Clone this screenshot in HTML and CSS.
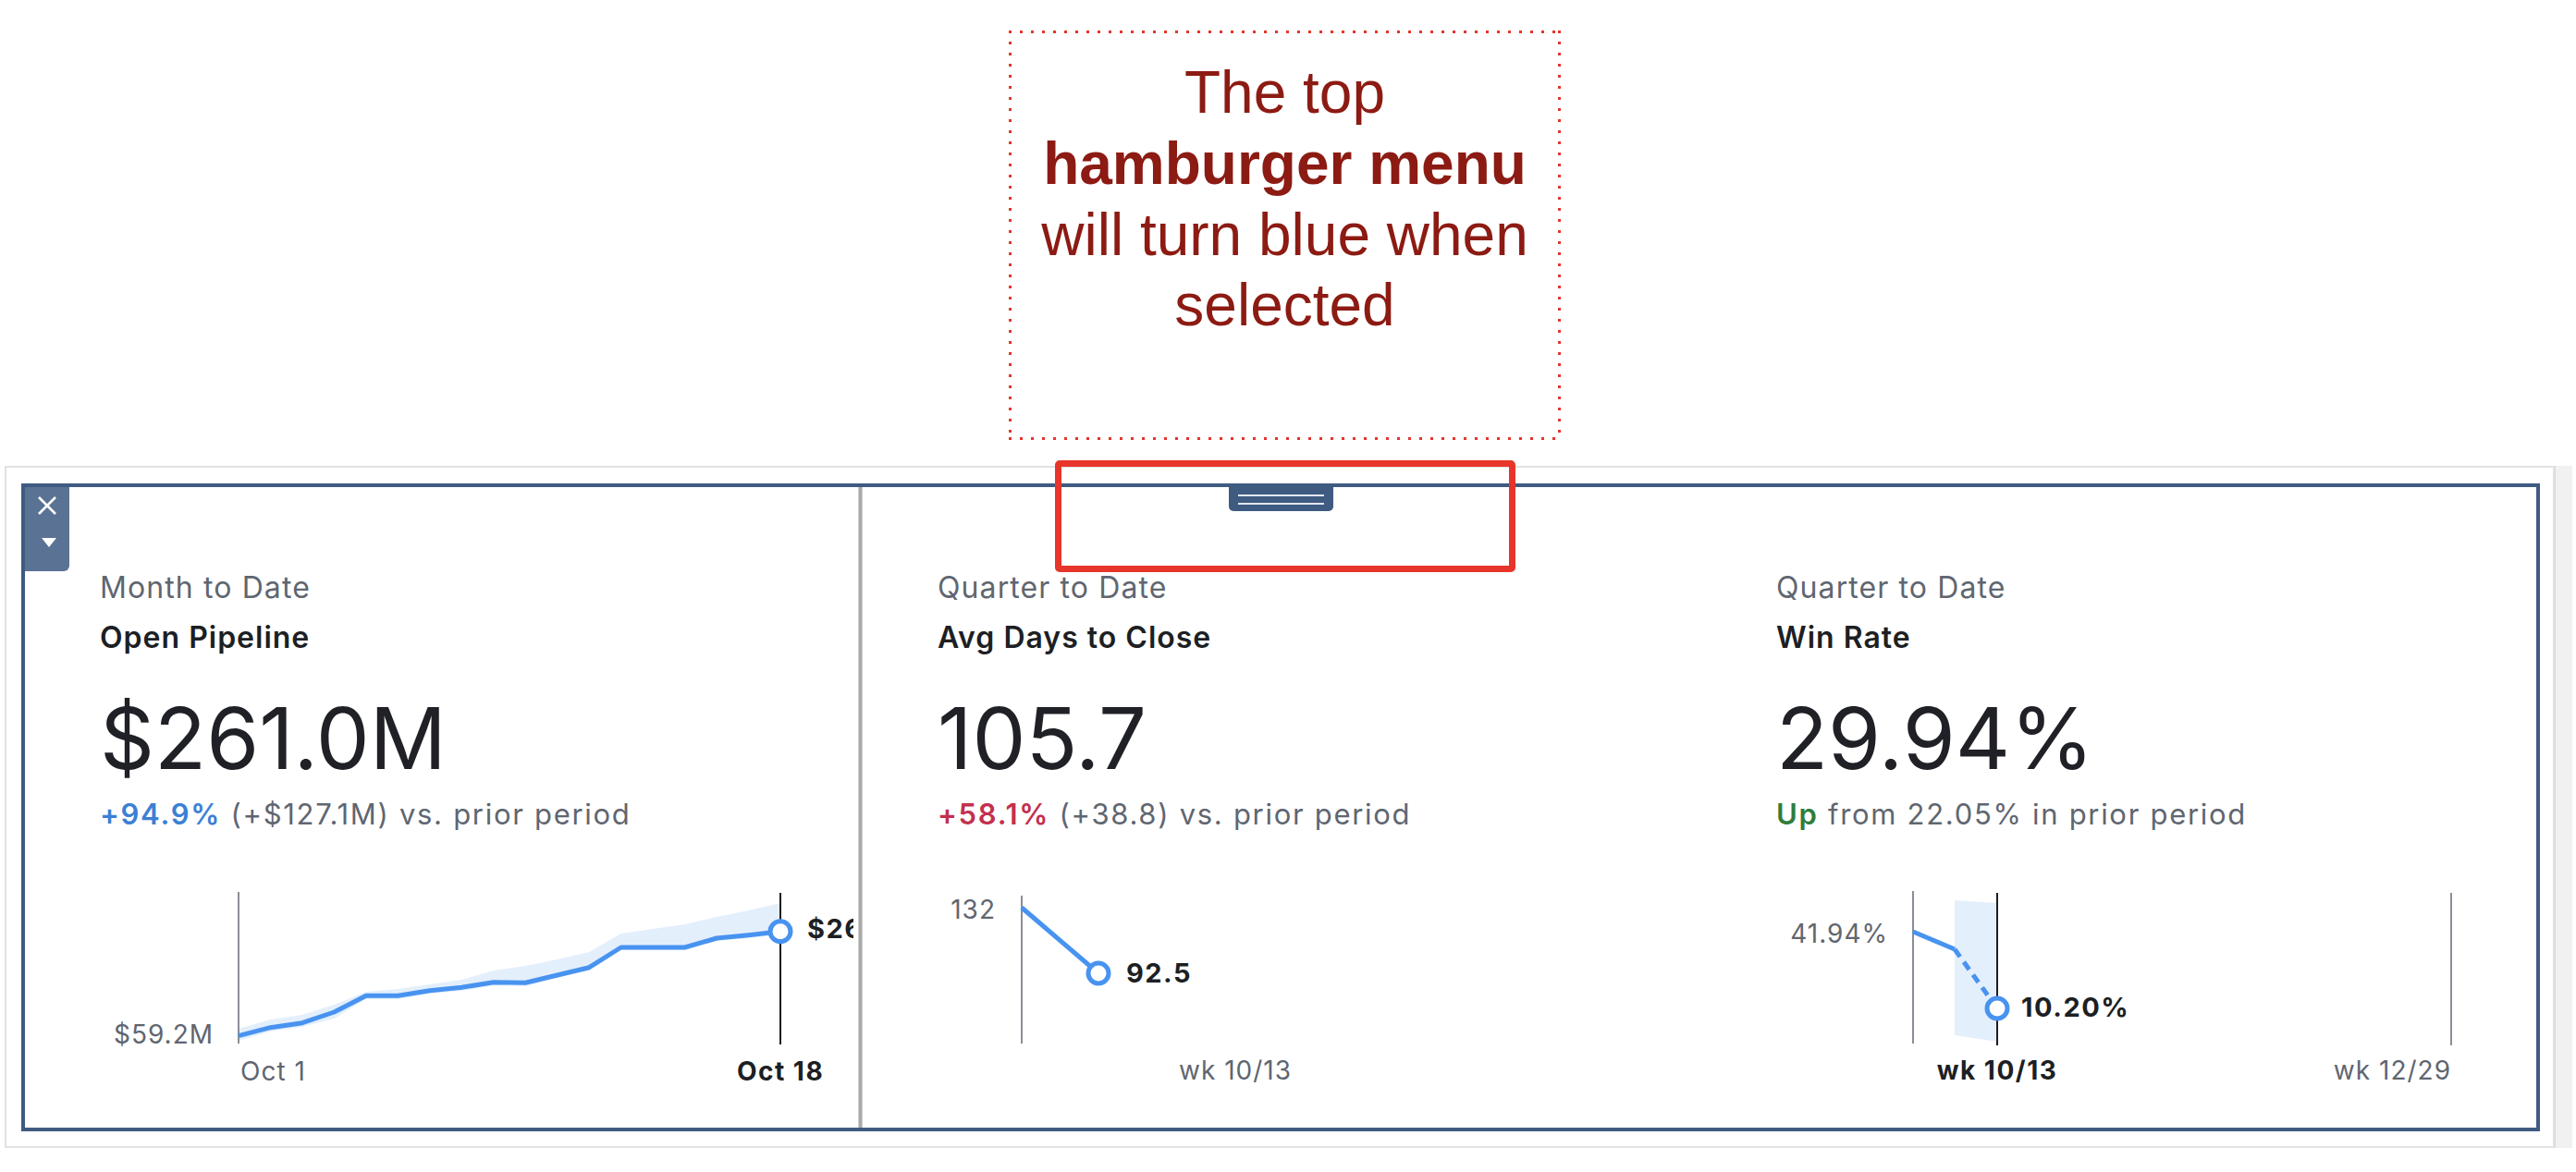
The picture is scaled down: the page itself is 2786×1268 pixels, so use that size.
FILE: index.html
```html
<!DOCTYPE html>
<html lang="en">
<head>
<meta charset="utf-8">
<title>Dashboard annotation</title>
<link rel="stylesheet" href="styles.css">
</head>
<body>
<div class="top">
  <div class="callout">
    <p class="callout-text">The top<br><b>hamburger menu</b><br>will turn blue when<br>selected</p>
  </div>
</div>
<div class="workspace">
  <div class="panel">
    <div class="frame">
      <div class="tab">
        <svg class="tab-close" width="22" height="22" viewBox="0 0 22 22"><path d="M2 2 L20 20 M20 2 L2 20"/></svg>
        <svg class="tab-caret" width="18" height="12" viewBox="0 0 18 12"><path d="M1 1 H17 L9 11 Z"/></svg>
      </div>
      <div class="handle"><span></span><span></span></div>

      <section class="kpi">
        <div class="period">Month to Date</div>
        <div class="title">Open Pipeline</div>
        <div class="value">$261.0M</div>
        <div class="change"><b class="pos">+94.9%</b> (+$127.1M) vs. prior period</div>
        <svg class="chart" width="815" height="250" viewBox="0 0 815 250">
          <polygon class="band" points="150,168 184.5,158 218.9,153 253.4,142 287.9,128 322.4,125 356.8,120 391.3,115 425.8,105 460.2,100 494.7,93 529.2,85 563.6,65 598.1,60 632.6,55 667.1,47 701.5,40 736,32 736,66 701.5,70 667.1,73 632.6,83 598.1,83 563.6,83 529.2,105 494.7,113 460.2,122 425.8,121 391.3,127 356.8,130 322.4,136 287.9,136 253.4,157 218.9,166 184.5,171 150,181"/>
          <line class="axis" x1="150" y1="20" x2="150" y2="184"/>
          <line class="cursor" x1="736" y1="21" x2="736" y2="185"/>
          <polyline class="trend" points="150,175.7 184.5,166.7 218.9,161.7 253.4,150 287.9,132.3 322.4,132.3 356.8,126.7 391.3,123.3 425.8,117.7 460.2,118.3 494.7,110 529.2,101.7 563.6,80 598.1,80 632.6,80 667.1,70 701.5,66.7 736,62.7"/>
          <circle class="marker" cx="736" cy="62.7" r="11"/>
          <text class="tick" x="123" y="184" text-anchor="end">$59.2M</text>
          <text class="tick" x="152" y="224">Oct 1</text>
          <text class="tick tick-strong" x="736" y="224" text-anchor="middle">Oct 18</text>
          <text class="point-label" x="765" y="70">$261.0M</text>
        </svg>
      </section>

      <div class="divider"></div>

      <section class="kpi">
        <div class="period">Quarter to Date</div>
        <div class="title">Avg Days to Close</div>
        <div class="value">105.7</div>
        <div class="change"><b class="neg">+58.1%</b> (+38.8) vs. prior period</div>
        <svg class="chart" width="826" height="250" viewBox="0 0 826 250">
          <line class="axis" x1="91" y1="24" x2="91" y2="184"/>
          <line class="trend" x1="91" y1="37" x2="174" y2="108"/>
          <circle class="marker" cx="174" cy="108" r="11"/>
          <text class="tick" x="63" y="49" text-anchor="end">132</text>
          <text class="point-label" x="204" y="118">92.5</text>
          <text class="tick" x="261" y="223">wk 10/13</text>
        </svg>
      </section>

      <section class="kpi">
        <div class="period">Quarter to Date</div>
        <div class="title">Win Rate</div>
        <div class="value">29.94%</div>
        <div class="change"><b class="up">Up</b> from 22.05% in prior period</div>
        <svg class="chart" width="822" height="250" viewBox="0 0 822 250">
          <polygon class="band" points="193,29 239,32 239,182 193,175"/>
          <line class="axis" x1="148" y1="19" x2="148" y2="184"/>
          <line class="cursor" x1="239" y1="21" x2="239" y2="186"/>
          <line class="axis" x1="730" y1="21" x2="730" y2="186"/>
          <line class="trend" x1="148" y1="63" x2="193" y2="82"/>
          <line class="trend trend-dashed" x1="193" y1="82" x2="239" y2="146"/>
          <circle class="marker" cx="239" cy="146" r="11"/>
          <text class="tick" x="121" y="75" text-anchor="end">41.94%</text>
          <text class="point-label" x="265" y="155">10.20%</text>
          <text class="tick tick-strong" x="239" y="223" text-anchor="middle">wk 10/13</text>
          <text class="tick" x="730" y="223" text-anchor="end">wk 12/29</text>
        </svg>
      </section>
    </div>
    <div class="highlight"></div>
  </div>
  <div class="track"></div>
</div>
</body>
</html>
```

FILE: styles.css
```css
* { box-sizing: border-box; }

body {
  margin: 0;
  background: #ffffff;
  font-family: Inter, "Noto Sans", "Liberation Sans", sans-serif;
}

/* ---------- annotation callout ---------- */
.top {
  height: 504px;
  padding-top: 33px;
}

.callout {
  width: 597px;
  height: 443px;
  margin-left: 1091px;
  padding-top: 29px;
  background-image:
    repeating-linear-gradient(90deg, #e5352c 0 3px, transparent 3px 12px),
    repeating-linear-gradient(90deg, #e5352c 0 3px, transparent 3px 12px),
    repeating-linear-gradient(180deg, #e5352c 0 3px, transparent 3px 12px),
    repeating-linear-gradient(180deg, #e5352c 0 3px, transparent 3px 12px);
  background-size: 100% 3px, 100% 3px, 3px 100%, 3px 100%;
  background-position: left top, left bottom, left top, right top;
  background-repeat: no-repeat;
}

.callout-text {
  margin: 0;
  font-family: "Liberation Sans", Arial, sans-serif;
  font-size: 64px;
  line-height: 76.8px;
  color: #8c1b13;
  text-align: center;
}

.callout-text b { font-weight: 700; }

/* ---------- workspace ---------- */
.workspace {
  display: flex;
  margin-left: 5px;
}

.panel {
  position: relative;
  width: 2758px;
  height: 738px;
  border: 2px solid #e2e2e2;
  padding: 17px 14px 16px 16px;
}

.track {
  width: 19px;
  height: 738px;
  background: #f1f1f1;
  border-left: 1px solid #dadada;
}

.frame {
  position: relative;
  height: 701px;
  border: 4px solid #3f5b81;
  display: grid;
  grid-template-columns: 901px 5px 907px 1fr;
}

.divider {
  background: #a9a9a9;
  border-left: 1px solid #cfcfcf;
  border-right: 1px solid #cfcfcf;
}

.tab {
  position: absolute;
  top: 0;
  left: 0;
  width: 48px;
  height: 91px;
  background: #5a7293;
  border-radius: 0 0 6px 0;
  display: flex;
  flex-direction: column;
  align-items: center;
  padding-top: 9px;
  gap: 23px;
  z-index: 2;
}

.tab-close path {
  stroke: #ffffff;
  stroke-width: 2.6;
  fill: none;
}

.tab-caret { margin-left: 3px; }

.tab-caret path { fill: #ffffff; }

.handle {
  position: absolute;
  top: 0;
  left: 50%;
  width: 113px;
  height: 26px;
  margin-left: -56.5px;
  background: #3f5b81;
  border-radius: 0 0 5px 5px;
  display: flex;
  flex-direction: column;
  align-items: center;
  padding-top: 8px;
  gap: 7px;
  z-index: 2;
}

.handle span {
  display: block;
  width: 93px;
  height: 2px;
  background: #e1e7ef;
}

.highlight {
  position: absolute;
  left: 1134px;
  top: -8px;
  width: 498px;
  height: 121px;
  border: 7px solid #e8352b;
  border-radius: 5px;
  z-index: 3;
}

/* ---------- KPI cards ---------- */
.kpi {
  min-width: 0;
  overflow: hidden;
  padding: 82px 0 0 81px;
}

.period {
  font-size: 32px;
  line-height: 54px;
  letter-spacing: 1.1px;
  color: #5f6670;
}

.title {
  font-size: 32px;
  line-height: 54px;
  letter-spacing: 1px;
  font-weight: 600;
  color: #1d1f24;
}

.value {
  margin-top: 27px;
  font-size: 92px;
  line-height: 110px;
  color: #1f2126;
}

.change {
  margin-top: 7px;
  font-size: 31px;
  line-height: 40px;
  letter-spacing: 1.7px;
  color: #5f6670;
  white-space: nowrap;
}

.change b { font-weight: 600; }
.pos { color: #3a80d6; }
.neg { color: #c2304f; }
.up { color: #2f7d3a; }

.chart {
  display: block;
  margin-top: 44px;
  overflow: hidden;
}

.band { fill: #e4effc; }

.axis {
  stroke: #8a8e96;
  stroke-width: 2;
}

.cursor {
  stroke: #1b1c1f;
  stroke-width: 2;
}

.trend {
  fill: none;
  stroke: #4893f0;
  stroke-width: 5;
  stroke-linejoin: round;
}

.trend-dashed { stroke-dasharray: 10 7; }

.marker {
  fill: #ffffff;
  stroke: #4893f0;
  stroke-width: 5;
}

.tick {
  font-family: Inter, "Noto Sans", sans-serif;
  font-size: 28px;
  letter-spacing: 1px;
  fill: #5f6670;
}

.tick-strong {
  font-weight: 700;
  letter-spacing: 1.5px;
  fill: #1d1f24;
}

.point-label {
  font-family: Inter, "Noto Sans", sans-serif;
  font-size: 29px;
  font-weight: 700;
  letter-spacing: 1.5px;
  fill: #1d1f24;
}
```
